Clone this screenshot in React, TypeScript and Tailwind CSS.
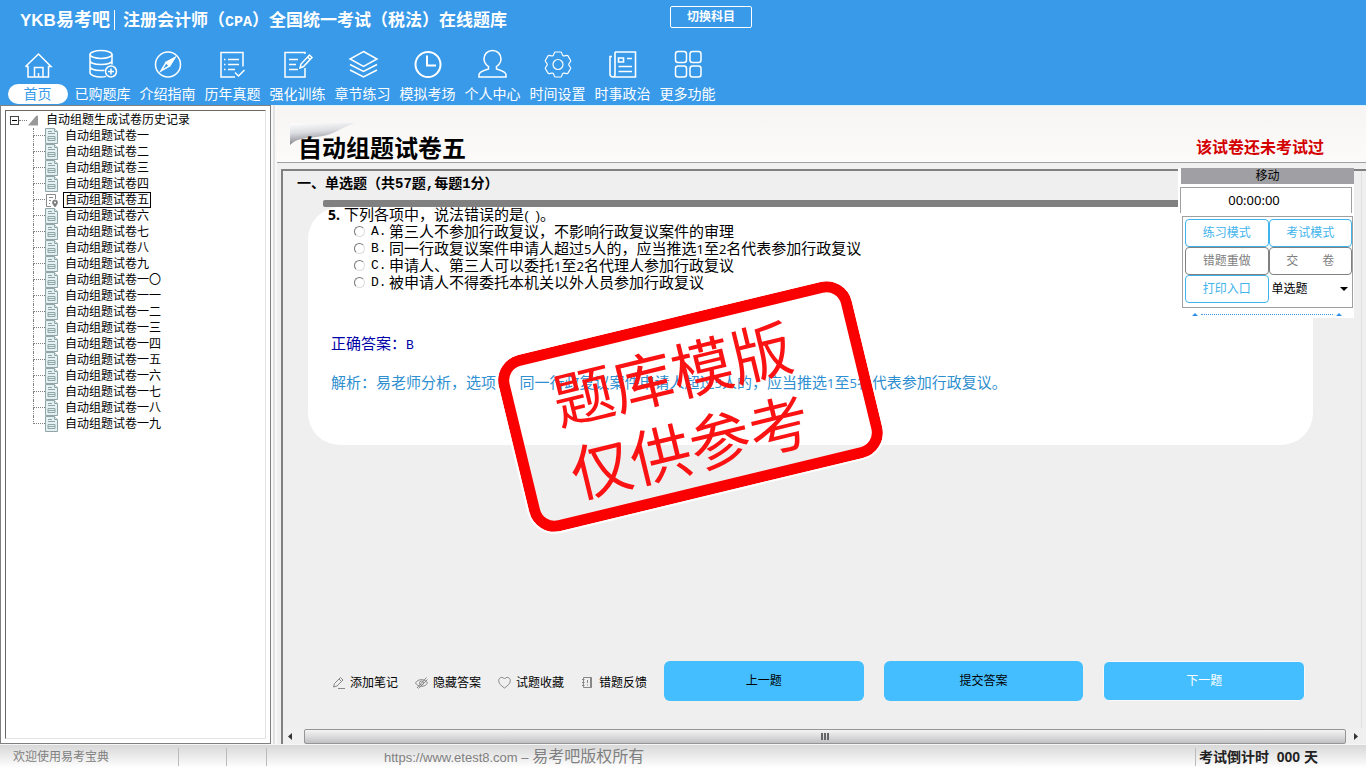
import React, { useState } from "react";

interface NavItem {
  label: string;
  icon: React.ReactNode;
}

const navItems: NavItem[] = [
  {
    label: "首页",
    icon: (
      <>
        <path d="M3.5 18.5 16.5 6 29 18.5h-2.5V29H6V18.5H3.5" />
        <path d="M12.5 29v-9.5H21V29M16.5 29v-4" />
      </>
    ),
  },
  {
    label: "已购题库",
    icon: (
      <>
        <ellipse cx="14" cy="6.5" rx="11" ry="4" />
        <path d="M3 6.5v18c0 2.5 5 4.5 11 4.5 2 0 3.5-.2 5-.6M25 6.5v10M3 12.5c0 2.5 5 4 11 4s11-1.5 11-4M3 18.5c0 2.5 5 4 11 4 1.2 0 2.5 0 3.5-.2" />
        <circle cx="24" cy="23.5" r="5.5" />
        <path d="M24 20.5v6M21 23.5h6" />
      </>
    ),
  },
  {
    label: "介绍指南",
    icon: (
      <>
        <circle cx="16" cy="16.5" r="12.5" />
        <path d="M22.5 10 14 14.5l-5 8.500 8.500-5z" />
        <path d="M14 14.5l3.5 3.500L22.5 10z" fill="white" />
      </>
    ),
  },
  {
    label: "历年真题",
    icon: (
      <>
        <path d="M26 18.5V4.5H4V29h14" />
        <path d="M11 11.5h11M11 16.5h11M11 21.5h7M7 11.5h1.5M7 16.5h1.5M7 21.5h1.5" />
        <path d="m18 24.5 3.5 3.5 6-6" />
      </>
    ),
  },
  {
    label: "强化训练",
    icon: (
      <>
        <path d="M23 6V4.5H3V29h20v-9" />
        <path d="M7 11.5h9M7 16.5h7M7 21.5h9" />
        <path d="m18 20 1-4 8.5-9 2.5 2.5-8.5 9zM25.5 9l2.5 2.5" />
      </>
    ),
  },
  {
    label: "章节练习",
    icon: (
      <>
        <path d="m16.5 3.5 13.5 7.5-13.5 7.5L3 11z" />
        <path d="m3 16.5 13.5 7 13.5-7M3 22l13.5 7L30 22" />
      </>
    ),
  },
  {
    label: "模拟考场",
    icon: (
      <>
        <circle cx="16" cy="16.5" r="12.5" strokeWidth="2" />
        <path d="M15 7.5v10h9" strokeWidth="2" />
      </>
    ),
  },
  {
    label: "个人中心",
    icon: (
      <path d="M11.5 18.5C8.5 16.5 7 14 7 11c0-5 3.5-8.5 8.5-8.5S24 6 24 11c0 3-1.5 5.5-4.5 7.5V21c5 1.5 9.5 3 9.5 5.500V29H2v-2.5c0-2.5 4.500-4 9.500-5.500z" />
    ),
  },
  {
    label: "时间设置",
    icon: (
      <>
        <circle cx="16" cy="16.5" r="5" strokeWidth="1.2" />
        <path
          d="M13 4h6c.8 0 1 3 2 3.700 1.500.8 4-1 4.800 0l2.900 4.800c.5 1-2 2.500-2 4s2.500 3 2 4l-2.900 4.800c-.8 1-3.300-.8-4.800 0-1 .7-1.200 3.700-2 3.700h-6c-.8 0-1-3-2-3.700-1.500-.8-4 1-4.800 0l-2.900-4.800c-.5-1 2-2.500 2-4s-2.500-3-2-4l2.900-4.800c.8-1 3.300.8 4.800 0C12 7 12.200 4 13 4z"
          strokeWidth="1.2"
        />
      </>
    ),
  },
  {
    label: "时事政治",
    icon: (
      <>
        <path d="M8 4h20.500v25H6c-2 0-3-1-3-3V8.500h2M8 4v22c0 2-.5 3-2 3" strokeWidth="1.6" />
        <path d="M11.500 10h5v4h-5zM20 10.500h5M11.500 18.500H25M11.500 23.500H25" strokeWidth="1.6" />
      </>
    ),
  },
  {
    label: "更多功能",
    icon: (
      <>
        <rect x="3.5" y="3.5" width="11" height="11" rx="2.5" />
        <rect x="18" y="3.5" width="11" height="11" rx="2.5" />
        <rect x="3.5" y="18" width="11" height="11" rx="2.5" />
        <rect x="18" y="18" width="11" height="11" rx="2.5" />
      </>
    ),
  },
];

const numerals = ["一", "二", "三", "四", "五", "六", "七", "八", "九", "一〇", "一一", "一二", "一三", "一四", "一五", "一六", "一七", "一八", "一九"];

const options = [
  "第三人不参加行政复议，不影响行政复议案件的审理",
  "同一行政复议案件申请人超过5人的，应当推选1至2名代表参加行政复议",
  "申请人、第三人可以委托1至2名代理人参加行政复议",
  "被申请人不得委托本机关以外人员参加行政复议",
];

const analysis = "解析：易老师分析，选项B，同一行政复议案件申请人超过5人的，应当推选1至5名代表参加行政复议。";

// digits and latin letters are set a bit smaller than the chinese text
const MixedText = ({ text }: { text: string }) => {
  return (
    <>
      {text.split(/([0-9A-Z]+)/).map((part, i) =>
        i % 2 === 1 ? (
          <span key={i} className="font-[Noto_Sans,sans-serif] text-[13px] leading-4">
            {part}
          </span>
        ) : (
          part
        ),
      )}
    </>
  );
};

const Header = () => {
  return (
    <header className="h-[105px] shrink-0 bg-[#389ae9] text-white">
      <div className="flex h-12 items-start pl-5">
        <span className="mt-2 text-lg leading-6 font-bold whitespace-nowrap">
          <span className="text-[17px] leading-6">YKB</span>易考吧
        </span>
        <span className="mt-[10px] ml-1 h-5 w-px bg-white" />
        <h1 className="mt-[10px] ml-2 font-[Liberation_Mono,Noto_Sans_CJK_SC,monospace] text-[17px] leading-6 font-bold whitespace-nowrap">
          注册会计师（<span className="text-[15px]">CPA</span>）全国统一考试（税法）在线题库
        </h1>
        <button className="mt-[6px] ml-[163px] h-[22px] w-[82px] shrink-0 rounded-xs border border-white text-xs font-bold">
          切换科目
        </button>
      </div>
      <nav className="flex pl-[5px]">
        {navItems.map((item, i) => (
          <a key={item.label} href="#" className="flex w-[65px] shrink-0 flex-col items-center">
            <svg className="h-8 w-8" viewBox="0 0 32 32" fill="none" stroke="white" strokeWidth="1.5">
              {item.icon}
            </svg>
            <span
              className={
                i === 0
                  ? "mt-1 flex h-5 w-15 items-center justify-center rounded-full bg-white text-sm text-[#389ae9]"
                  : "mt-1 flex h-5 items-center text-sm whitespace-nowrap"
              }
            >
              {item.label}
            </span>
          </a>
        ))}
      </nav>
    </header>
  );
};

const PaperIcon = ({ active }: { active: boolean }) => {
  if (active) {
    return (
      <svg className="h-4 w-[14px] shrink-0" viewBox="0 0 14 16" fill="none" stroke="#8a8a8a">
        <path d="M6 14.500H1.500v-12h9V7M4 5.500h4M4 8.500h2M4 11.500h1" />
        <path d="M10 8a2.500 2.500 0 0 1 2.500 2.500C12.500 12 10 15 10 15s-2.500-3-2.500-4.500A2.500 2.500 0 0 1 10 8z" fill="#777" />
        <circle cx="10" cy="10.5" r="1" fill="white" stroke="none" />
      </svg>
    );
  }
  return (
    <svg className="h-4 w-[14px] shrink-0" viewBox="0 0 14 16" fill="#e3eff0" stroke="#8fa6a8">
      <path d="M.5.500h9l3 3v12H.5z" />
      <path d="M9.500.500v3h3M3 3.500h4M3 5.500h7" />
      <path d="M3 8.500h7v4H3zM3 10.500h7" />
    </svg>
  );
};

const Sidebar = ({ current, onSelect }: { current: number; onSelect: (i: number) => void }) => {
  return (
    <aside className="w-[271px] shrink-0 border border-[#808080] bg-white p-1">
      <div className="h-full border border-t-[#696969] border-r-[#e3e3e3] border-b-[#e3e3e3] border-l-[#696969] pt-px text-xs text-black">
        <div className="flex h-4 items-center pl-1">
          <button aria-label="折叠" className="flex h-[9px] w-[9px] items-center justify-center border border-[#444]">
            <span className="h-px w-[5px] bg-black" />
          </button>
          <span className="w-2 border-b border-dotted border-[#808080]" />
          <svg className="ml-px h-[11px] w-[11px]" viewBox="0 0 11 11">
            <path d="M0 10.500 8 1l2-.5v10z" fill="#999" />
          </svg>
          <span className="ml-[7px] whitespace-nowrap">自动组题生成试卷历史记录</span>
        </div>
        <ul>
          {numerals.map((n, i) => (
            <li key={n} className="flex h-4 items-center pl-[27px]">
              <span className="flex h-4 w-3 shrink-0 flex-col">
                <span className="h-2 border-b border-l border-dotted border-[#808080]" />
                {i < numerals.length - 1 && <span className="h-2 border-l border-dotted border-[#808080]" />}
              </span>
              <PaperIcon active={i === current} />
              <button
                onClick={() => onSelect(i)}
                className={
                  i === current
                    ? "ml-1 h-4 border border-black px-px leading-[14px] whitespace-nowrap"
                    : "ml-1 h-4 border border-transparent px-px leading-[14px] whitespace-nowrap"
                }
              >
                自动组题试卷{n}
              </button>
            </li>
          ))}
        </ul>
      </div>
    </aside>
  );
};

const ControlPanel = () => {
  const blue = "h-7 rounded-[4px] border border-[#3fb4ec] bg-white text-xs text-[#3fb4ec]";
  const gray = "h-7 rounded-[4px] border border-[#808080] bg-white text-xs text-[#808080]";
  return (
    <div className="absolute top-[63px] right-3 w-[176px] bg-white pl-[2px] text-xs">
      <div className="ml-px flex h-4 items-center justify-center bg-[#a0a0a4] text-black">移动</div>
      <div className="mt-[3px] mr-[2px] flex h-[26px] items-center justify-center border border-b-0 border-[#a0a0a0] pr-6 font-[Noto_Sans,sans-serif] text-[13px] text-black">
        00:00:00
      </div>
      <div className="mt-[3px] mr-px ml-[2px] grid h-[92px] grid-cols-2 content-start border border-[#a0a0a0] p-[2px] pr-0 pb-0">
        <button className={blue}>练习模式</button>
        <button className={blue}>考试模式</button>
        <button className={gray}>错题重做</button>
        <button className={gray}>交&emsp;&emsp;卷</button>
        <button className={blue}>打印入口</button>
        <label className="relative flex items-center">
          <select aria-label="题型" className="h-6 w-full appearance-none bg-white pl-[3px] text-xs text-black">
            <option>单选题</option>
          </select>
          <svg className="pointer-events-none absolute right-1 h-[4px] w-2" viewBox="0 0 8 4">
            <path d="M0 0h8L4 4z" fill="black" />
          </svg>
        </label>
      </div>
      <div className="flex h-[10px] items-center gap-[3px] px-3 pt-[3px]">
        <svg className="h-[3px] w-[6px]" viewBox="0 0 6 3">
          <path d="M0 3 3 0l3 3z" fill="#3390e8" />
        </svg>
        <span className="flex-1 border-b border-dotted border-[#3f9ae8]" />
        <svg className="h-[3px] w-[6px]" viewBox="0 0 6 3">
          <path d="M0 3 3 0l3 3z" fill="#3390e8" />
        </svg>
      </div>
    </div>
  );
};

const Stamp = () => {
  return (
    <div className="pointer-events-none absolute top-[146px] left-[232px] flex h-[181px] w-[363px] rotate-[-13.6deg] flex-col items-center justify-center rounded-[26px] border-[11px] border-[#fb0000] pt-2 pr-5 text-[61px] leading-[75px] text-[#fb1212] outline-2 outline-white">
      <span className="whitespace-nowrap">题库模版</span>
      <span className="whitespace-nowrap">仅供参考</span>
    </div>
  );
};

const tools = [
  {
    label: "添加笔记",
    icon: <path d="m1.500 11 1-3.500 6-6 2.500 2.500-6 6zM7 3l2.500 2.500M6 12.500h7" />,
  },
  {
    label: "隐藏答案",
    icon: (
      <>
        <path d="M.5 7C3 2.500 10 2.500 12.500 7 10 11.500 3 11.500.5 7zM2 12 11.500 1.500M3.500 12.500l9-9" />
        <circle cx="6.5" cy="7" r="2" />
      </>
    ),
  },
  {
    label: "试题收藏",
    icon: <path d="M6.500 12C3 9.500.7 7.500.7 4.700c0-3.500 4-4.500 5.800-1.700 1.800-2.800 5.800-1.800 5.800 1.700 0 2.800-2.300 4.800-5.800 7.300z" />,
  },
  {
    label: "错题反馈",
    icon: (
      <>
        <path d="M2.500 1.500h8v10h-8zM1 3.500h2.500M1 6.500h2.500M1 9.500h2.500M6.500 4v3M6.500 8.500v1" />
        <path d="M10 1.500v10" strokeWidth="2" />
      </>
    ),
  },
];

const QuestionPanel = () => {
  const [answer, setAnswer] = useState(-1);

  return (
    <section className="mt-[6px] ml-1 flex flex-1 flex-col border-t-2 border-l-2 border-[#808080] bg-[#efefef]">
      <div className="mr-1 flex flex-1 flex-col border-r border-[#e0e0e0]">
        <h3 className="mt-[3px] ml-[14px] font-[Liberation_Mono,Noto_Sans_CJK_SC,monospace] text-sm leading-5 font-bold text-black">
          一、单选题（共57题,每题1分）
        </h3>
        <div className="mt-[6px] mr-4 ml-10 h-[7px] shrink-0 rounded-l-xs bg-[#808080]" />
        <div className="relative mr-12 ml-[25px] h-[238px] shrink-0 rounded-[32px] bg-white text-[15px] text-black">
          <p className="h-4 pl-5 leading-4 whitespace-nowrap">
            <b className="font-[Noto_Sans,sans-serif] text-sm leading-4">5.</b> 下列各项中，说法错误的是
            <span className="text-[13px] leading-4">( &nbsp;)</span>。
          </p>
          {options.map((text, i) => (
            <label key={i} className="flex h-[17px] items-center pl-[46px] whitespace-nowrap">
              <input
                type="radio"
                name="answer"
                checked={answer === i}
                onChange={() => setAnswer(i)}
                className="h-[11px] w-[11px] appearance-none rounded-full border border-t-[#777] border-r-[#ddd] border-b-[#ddd] border-l-[#777] bg-white checked:bg-black"
              />
              <span className="ml-[6px] w-[18px] font-[Liberation_Mono,monospace] text-[13px] leading-[17px]">
                {"ABCD"[i]}.
              </span>
              <span className="leading-[17px]">
                <MixedText text={text} />
              </span>
            </label>
          ))}
          <p className="mt-[43px] pl-[23px] leading-5 text-[#0000a8]">
            正确答案：<span className="font-[Liberation_Mono,monospace] text-[13px]">B</span>
          </p>
          <p className="mt-[17px] pl-[23px] leading-5 whitespace-nowrap text-[#2f8fd0]">
            <MixedText text={analysis} />
          </p>
        </div>
        <div className="mt-auto mr-14 mb-[27px] ml-[49px] flex h-10 items-center gap-5">
          <div className="flex w-[312px] shrink-0 items-center gap-[17px] pt-1">
            {tools.map((tool) => (
              <button key={tool.label} className="flex items-center gap-1 text-xs whitespace-nowrap text-black">
                <svg className="h-[14px] w-[14px]" viewBox="0 0 14 14" fill="none" stroke="#888">
                  {tool.icon}
                </svg>
                {tool.label}
              </button>
            ))}
          </div>
          <button className="h-10 flex-1 rounded-md bg-[#44beff] text-xs text-black">上一题</button>
          <button className="h-10 flex-1 rounded-md bg-[#44beff] text-xs text-black">提交答案</button>
          <button className="h-10 flex-1 rounded-md border border-[#f8f8f8] bg-[#44beff] text-xs text-white">下一题</button>
        </div>
      </div>
      <div className="flex h-4 shrink-0 items-center bg-[#f0f0f0]">
        <button aria-label="向左滚动" className="flex w-[21px] shrink-0 items-center pl-[5px]">
          <svg className="h-[7px] w-1" viewBox="0 0 4 7">
            <path d="M4 0v7L0 3.500z" fill="#333" />
          </svg>
        </button>
        <div className="flex h-[15px] flex-1 items-center justify-center gap-px rounded-xs border border-[#959595] bg-gradient-to-b from-[#f4f4f4] via-[#dcdcde] to-[#c0c0c4]">
          <span className="h-[7px] w-[2px] bg-[#666]" />
          <span className="h-[7px] w-[2px] bg-[#666]" />
          <span className="h-[7px] w-[2px] bg-[#666]" />
        </div>
        <button aria-label="向右滚动" className="flex w-5 shrink-0 items-center pl-2">
          <svg className="h-[7px] w-1" viewBox="0 0 4 7">
            <path d="M0 0v7l4-3.500z" fill="#333" />
          </svg>
        </button>
      </div>
    </section>
  );
};

const Footer = () => {
  return (
    <footer className="flex h-6 shrink-0 items-center border-t border-[#f6f6f6] bg-gradient-to-b from-[#d8d8d8] to-white pt-px text-xs whitespace-nowrap text-[#808080]">
      <span className="w-[178px] pl-[13px]">欢迎使用易考宝典</span>
      <span className="h-[18px] w-12 border-l border-[#bbb]" />
      <span className="h-[18px] w-10 border-l border-[#bbb]" />
      <span className="h-[18px] w-[118px] border-l border-[#bbb]" />
      <span className="text-[13px]">
        https://www.etest8.com – <span className="text-base leading-5">易考吧版权所有</span>
      </span>
      <span className="ml-auto flex h-[18px] w-[171px] items-center border-l border-[#bbb] pl-[3px] text-sm font-bold text-[#222]">
        考试倒计时&nbsp;&nbsp;000&nbsp;天
      </span>
    </footer>
  );
};

export default function App() {
  const [current, setCurrent] = useState(4);

  return (
    <div className="flex h-screen flex-col overflow-hidden bg-[#f0f0f0] font-[Liberation_Sans,Noto_Sans_CJK_SC,sans-serif]">
      <Header />
      <div className="flex min-h-0 flex-1">
        <Sidebar current={current} onSelect={setCurrent} />
        <div className="w-[6px] shrink-0 border-x-2 border-[#f8f8f8] bg-[#e2e2e2]" />
        <main className="relative flex min-w-0 flex-1 flex-col">
          <div className="flex h-[58px] shrink-0 items-end justify-between border-t border-b border-t-[#d8f6ff] border-b-[#a0a0a0] bg-gradient-to-b from-[#f6f5f4] to-[#fcfbf9] pr-[42px] pl-[13px]">
            <div className="relative">
              <svg className="absolute -top-[13px] left-0 h-[22px] w-[66px]" viewBox="0 0 66 22">
                <defs>
                  <linearGradient id="curl" x1="0" y1="0" x2="0.25" y2="1">
                    <stop offset="0" stopColor="#ffffff" />
                    <stop offset="0.45" stopColor="#dcdde1" />
                    <stop offset="1" stopColor="#7c7e86" />
                  </linearGradient>
                </defs>
                <path d="M0 0h65C48 6 42 13 26 14 14 15 6 16 0 22z" fill="url(#curl)" />
              </svg>
              <h2 className="relative pl-2 text-2xl leading-[26px] font-bold text-black">
                自动组题试卷{numerals[current]}
              </h2>
            </div>
            <span className="mb-[2px] text-base leading-6 font-bold text-[#d40000]">该试卷还未考试过</span>
          </div>
          <QuestionPanel />
          <ControlPanel />
          <div className="absolute top-[65px] left-0">
            <Stamp />
          </div>
        </main>
      </div>
      <Footer />
    </div>
  );
}
